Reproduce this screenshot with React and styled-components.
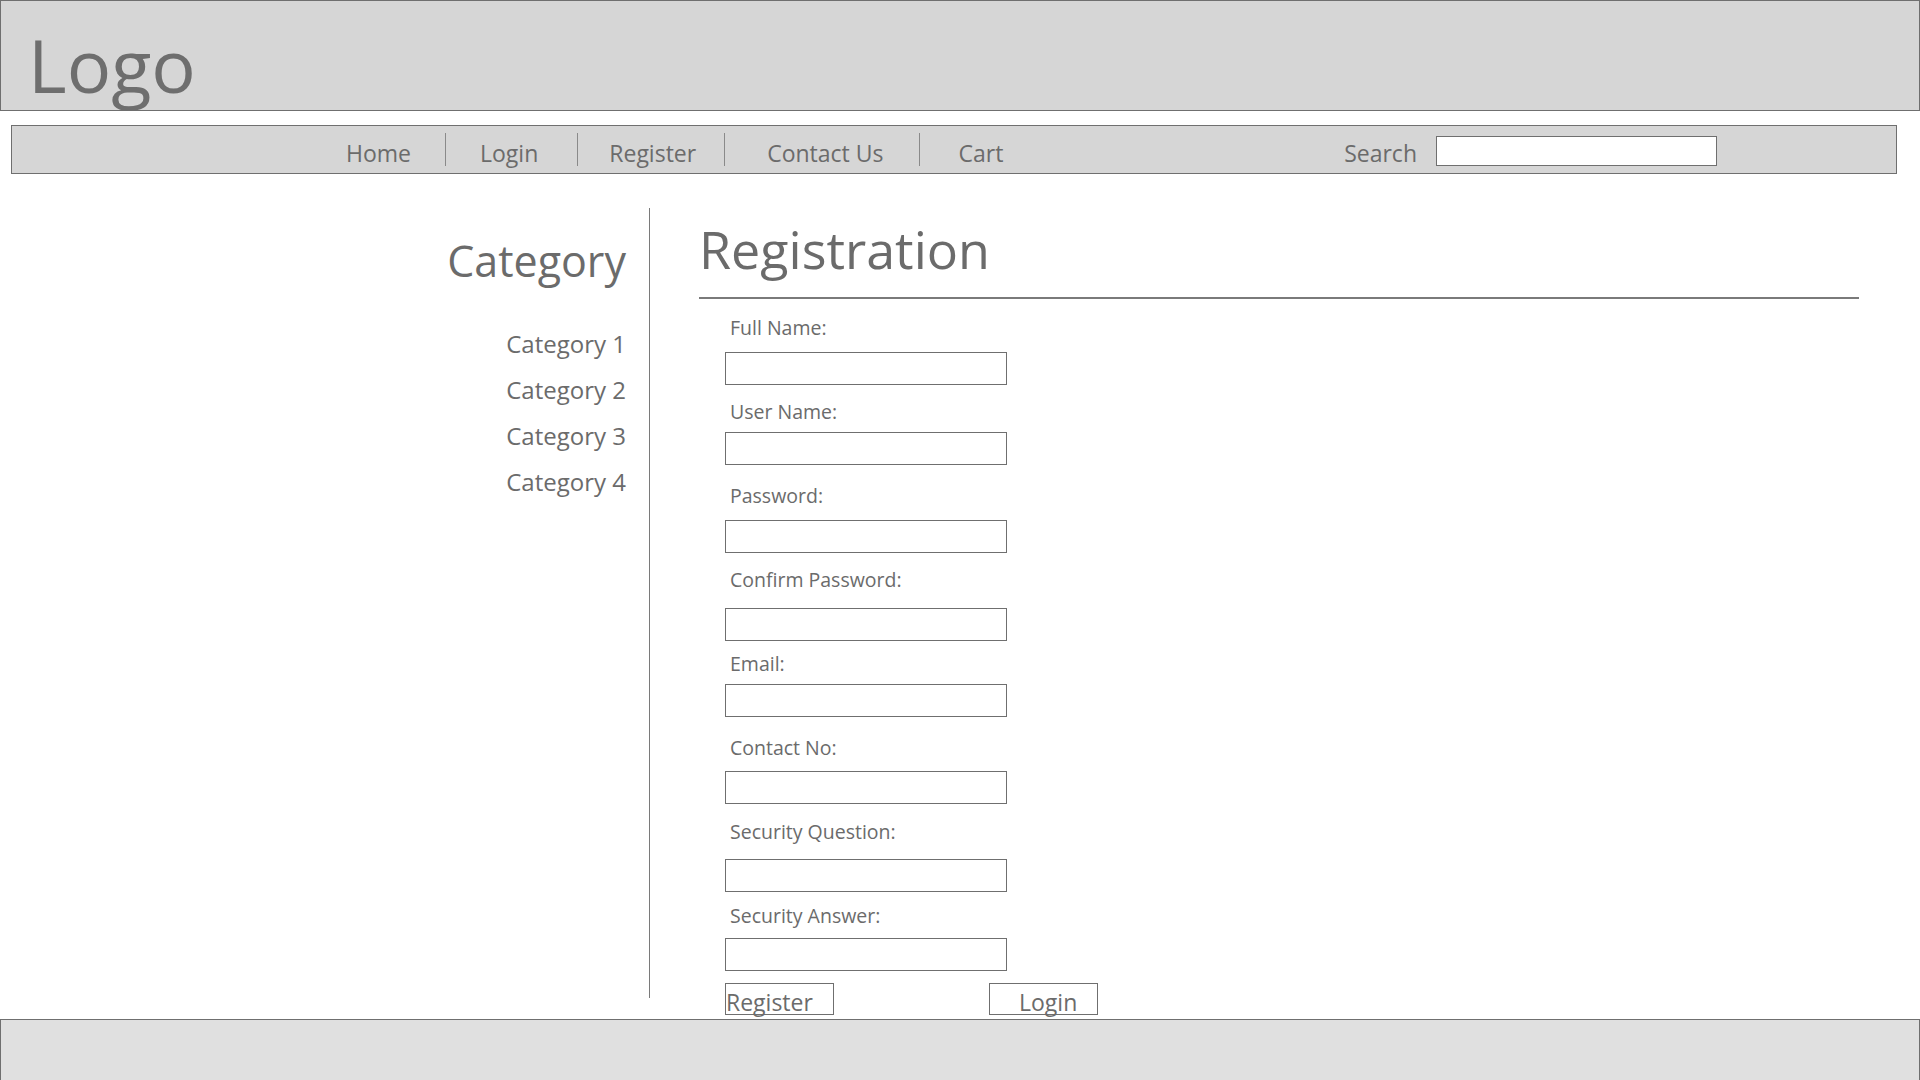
import React from 'react'
import styled, { createGlobalStyle } from 'styled-components'

const GlobalStyle = createGlobalStyle`
  html, body {
    margin: 0;
    padding: 0;
    background: #ffffff;
    font-family: 'Open Sans', 'Noto Sans', sans-serif;
    color: #6b6b6b;
  }
  * {
    box-sizing: border-box;
  }
`

const Page = styled.div`
  display: flex;
  flex-direction: column;
  height: 1080px;
  overflow: hidden;
`

const Header = styled.header`
  height: 111px;
  flex-shrink: 0;
  background-color: #d6d6d6;
  border: 1px solid #6f6f6f;
  padding: 20px 0 0 27px;
`

const Logo = styled.h1`
  margin: 0;
  font-size: 74px;
  font-weight: 400;
  line-height: 88px;
  color: #6e6e6e;
`

const Nav = styled.nav`
  height: 49px;
  flex-shrink: 0;
  margin: 14px 23px 0 11px;
  background-color: #d6d6d6;
  border: 1px solid #6f6f6f;
  display: flex;
  align-items: center;
  padding: 0 179px 0 334px;
`

const NavLinks = styled.ul`
  list-style: none;
  margin: 0;
  padding: 0;
  display: flex;
  align-items: center;
`

const NavItem = styled.li`
  font-size: 23px;
  line-height: 33px;
  height: 33px;
  padding: 0 ${props => props.$right}px 0 ${props => props.$left}px;
  border-left: ${props => (props.$first ? 'none' : '1px solid #8a8a8a')};
  color: #6b6b6b;
  cursor: pointer;
`

const NavText = styled.span`
  display: block;
  transform: translateY(4px);
`

const SearchBox = styled.div`
  margin-left: auto;
  display: flex;
  align-items: center;
  gap: 19px;
`

const SearchLabel = styled.span`
  font-size: 23px;
  line-height: 33px;
  margin-top: 7px;
  color: #6b6b6b;
`

const SearchInput = styled.input`
  width: 281px;
  height: 30px;
  margin-top: 2px;
  border: 1px solid #6f6f6f;
  background: #ffffff;
  outline: none;
`

const Main = styled.main`
  flex: 1;
  display: flex;
  min-height: 0;
`

const Sidebar = styled.aside`
  width: 650px;
  flex-shrink: 0;
  margin: 34px 0 21px;
  border-right: 1px solid #7a7a7a;
  padding: 27px 23px 0 0;
  text-align: right;
`

const SideTitle = styled.h2`
  margin: 0;
  font-size: 43px;
  font-weight: 400;
  line-height: 52px;
  color: #6b6b6b;
`

const CategoryList = styled.ul`
  list-style: none;
  margin: 34px 0 0;
  padding: 0;
`

const CategoryItem = styled.li`
  font-size: 24px;
  line-height: 46px;
  color: #6b6b6b;
`

const Content = styled.section`
  flex: 1;
  padding: 0 61px 0 49px;
`

const Title = styled.h2`
  margin: 0;
  padding-top: 43px;
  font-size: 52px;
  font-weight: 400;
  line-height: 64px;
  color: #6b6b6b;
  border-bottom: 2px solid #7a7a7a;
  padding-bottom: 16px;
`

const Form = styled.form`
  margin-top: 16px;
  padding-left: 26px;
  display: grid;
  grid-auto-rows: 84px;
  width: 420px;
`

const Field = styled.div`
  display: flex;
  flex-direction: column;
`

const Label = styled.label`
  font-size: 19.5px;
  line-height: 26px;
  padding-left: 5px;
  color: #6b6b6b;
`

const TextInput = styled.input`
  width: 282px;
  height: 33px;
  margin-top: ${props => props.$gap}px;
  border: 1px solid #6f6f6f;
  background: #ffffff;
  outline: none;
`

const Buttons = styled.div`
  margin-top: -4px;
  display: flex;
  gap: 155px;
`

const Button = styled.button`
  width: 109px;
  height: 32px;
  padding: 7px 0 0 ${props => props.$indent}px;
  border: 1px solid #6f6f6f;
  background: #ffffff;
  font-family: 'Open Sans', 'Noto Sans', sans-serif;
  font-size: 23px;
  line-height: 23px;
  color: #6b6b6b;
  text-align: left;
  white-space: nowrap;
  overflow: visible;
  position: relative;
  z-index: 2;
  cursor: pointer;
`

const Footer = styled.footer`
  height: 61px;
  flex-shrink: 0;
  background-color: #e0e0e0;
  border: 1px solid #6f6f6f;
  border-bottom: none;
`

const navLinks = [
  { label: 'Home', left: 0, right: 34 },
  { label: 'Login', left: 34, right: 39 },
  { label: 'Register', left: 31, right: 28 },
  { label: 'Contact Us', left: 42, right: 36 },
  { label: 'Cart', left: 38, right: 0 },
]
const categories = ['Category 1', 'Category 2', 'Category 3', 'Category 4']
const fields = [
  { label: 'Full Name:', gap: 11, type: 'text' },
  { label: 'User Name:', gap: 7, type: 'text' },
  { label: 'Password:', gap: 11, type: 'password' },
  { label: 'Confirm Password:', gap: 15, type: 'password' },
  { label: 'Email:', gap: 7, type: 'email' },
  { label: 'Contact No:', gap: 10, type: 'text' },
  { label: 'Security Question:', gap: 14, type: 'text' },
  { label: 'Security Answer:', gap: 9, type: 'text' },
]

const App = () => {
  return (
    <Page>
      <GlobalStyle />
      <Header>
        <Logo>Logo</Logo>
      </Header>
      <Nav>
        <NavLinks>
          {navLinks.map((link, i) => (
            <NavItem key={link.label} $first={i === 0} $left={link.left} $right={link.right}>
              <NavText>{link.label}</NavText>
            </NavItem>
          ))}
        </NavLinks>
        <SearchBox>
          <SearchLabel>Search</SearchLabel>
          <SearchInput type='text' />
        </SearchBox>
      </Nav>
      <Main>
        <Sidebar>
          <SideTitle>Category</SideTitle>
          <CategoryList>
            {categories.map(cat => (
              <CategoryItem key={cat}>{cat}</CategoryItem>
            ))}
          </CategoryList>
        </Sidebar>
        <Content>
          <Title>Registration</Title>
          <Form onSubmit={e => e.preventDefault()}>
            {fields.map(f => (
              <Field key={f.label}>
                <Label>{f.label}</Label>
                <TextInput type={f.type} $gap={f.gap} />
              </Field>
            ))}
            <Buttons>
              <Button type='submit' $indent={0}>Register</Button>
              <Button type='button' $indent={29}>Login</Button>
            </Buttons>
          </Form>
        </Content>
      </Main>
      <Footer />
    </Page>
  )
}

export default App
